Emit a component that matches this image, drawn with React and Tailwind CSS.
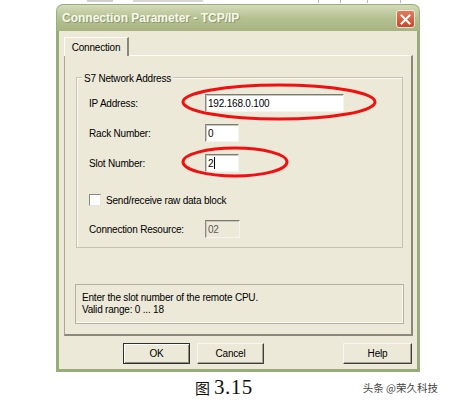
import React from 'react';

const ui = "font-['Liberation_Sans',Arial,sans-serif] text-[10px] tracking-[-0.2px] text-black";

function Field({ width, value, disabled, cursor }) {
  return (
    <div
      className={`h-[18px] flex items-center pl-[2px] border-t border-l border-t-[#7b7a72] border-l-[#8c8b82] border-b border-r border-b-[#f4f3ee] border-r-[#f4f3ee] shadow-[inset_1px_1px_0_#c9c7bc] ${
        disabled ? 'bg-[#ece9d8] text-[#5a5a5a]' : 'bg-white'
      }`}
      style={{ width }}
    >
      <span>{value}</span>
      {cursor && <span className="w-px h-[12px] bg-black ml-px" />}
    </div>
  );
}

function Row({ label, children, className = '' }) {
  return (
    <div className={`flex items-center ${className}`}>
      <span className="w-[116px]">{label}</span>
      {children}
    </div>
  );
}

function Button({ children, primary, className = '' }) {
  return (
    <button
      className={`h-[21px] flex items-center justify-center bg-[#ece9d8] border ${
        primary
          ? 'border-[#2f2f2f] shadow-[inset_1px_1px_0_#ffffff,inset_-1px_-1px_0_#8e8c80]'
          : 'border-t-[#f7f6f1] border-l-[#f7f6f1] border-b-[#3f3e3a] border-r-[#3f3e3a] shadow-[inset_-1px_-1px_0_#a5a398]'
      } ${className}`}
    >
      {children}
    </button>
  );
}

export default function App() {
  return (
    <div className="w-[458px] h-[404px] bg-white relative overflow-hidden">
      {/* leftover of the page above the dialog */}
      <div className="h-[4px] flex items-start">
        <span className="ml-[87px] w-[26px] h-[2px] bg-[#cfcfcf]" />
        <span className="ml-[20px] w-[70px] h-[2px] bg-[#d6d6d6]" />
        <span className="ml-[115px] w-px h-[3px] bg-[#b9b9b9]" />
        <span className="ml-[21px] w-px h-[3px] bg-[#b9b9b9]" />
        <span className="ml-[26px] w-px h-[3px] bg-[#b9b9b9]" />
        <span className="ml-[32px] w-px h-[3px] bg-[#b9b9b9]" />
      </div>

      {/* dialog window */}
      <div className="ml-[56px] w-[364px] h-[368px] flex flex-col">
        <div className="h-[27px] rounded-t-[7px] bg-linear-to-b from-[#d3dbb9] via-[#b6c192] to-[#a7b381] border-t border-x border-[#9aae7c] flex items-center pl-[5px] pr-[4px]">
          <span className="font-['Liberation_Sans',Arial,sans-serif] font-bold text-[12px] text-[#f7f7ec] [text-shadow:1px_1px_0_#8d9a6c]">
            Connection Parameter - TCP/IP
          </span>
          <div className="ml-auto mt-[2px] w-[19px] h-[18px] rounded-[3px] border border-[#f3e6dc] bg-linear-to-b from-[#e27a5c] to-[#c9482a] flex items-center justify-center">
            <svg width="11" height="11" viewBox="0 0 11 11">
              <path d="M1.5 1.5 L9.5 9.5 M9.5 1.5 L1.5 9.5" stroke="#ffffff" strokeWidth="2" strokeLinecap="square" />
            </svg>
          </div>
        </div>

        <div className={`flex-1 bg-[#ece9d8] border-x-[3px] border-b-[3px] border-[#97ac79] pl-[5px] pt-[6px] ${ui}`}>
          {/* tab */}
          <div className="relative z-10 w-[65px] h-[19px] -mb-px bg-[#ece9d8] border-t border-l border-t-[#fcfcf8] border-l-[#fcfcf8] border-r-2 border-r-[#8a887d] flex items-center justify-center pt-px">
            Connection
          </div>

          {/* tab panel */}
          <div className="w-[349px] h-[281px] border-t border-l border-t-[#fcfcf8] border-l-[#a9a698] border-r-2 border-b-2 border-r-[#8a887d] border-b-[#8a887d] pl-[11px] pt-[21px]">
            {/* group box */}
            <div className="relative w-[327px] h-[171px] border border-[#c6c3b2] shadow-[inset_1px_1px_0_#fbfaf5] pl-[12px] pt-[16px]">
              <span className="absolute -top-[7px] left-[5px] px-[2px] bg-[#ece9d8]">S7 Network Address</span>
              <Row label="IP Address:">
                <Field width={139} value="192.168.0.100" />
              </Row>
              <Row label="Rack Number:" className="mt-[12px]">
                <Field width={34} value="0" />
              </Row>
              <Row label="Slot Number:" className="mt-[12px]">
                <Field width={34} value="2" cursor />
              </Row>
              <div className="mt-[19px] h-[18px] flex items-center">
                <span className="w-[12px] h-[12px] bg-white border border-t-[#8a897f] border-l-[#8a897f] border-b-[#e8e6dc] border-r-[#e8e6dc]" />
                <span className="ml-[5px]">Send/receive raw data block</span>
              </div>
              <Row label="Connection Resource:" className="mt-[11px]">
                <Field width={35} value="02" disabled />
              </Row>
            </div>

            {/* hint box */}
            <div className="mt-[36px] -ml-px w-[329px] h-[40px] border border-[#b4b1a1] shadow-[inset_-1px_-1px_0_#fbfaf5] pl-[6px] pt-[7px] leading-[12px]">
              <div>Enter the slot number of the remote CPU.</div>
              <div>Valid range: 0 ... 18</div>
            </div>
          </div>

          {/* buttons */}
          <div className="w-[349px] mt-[7px] flex">
            <Button primary className="ml-[59px] w-[67px]">OK</Button>
            <Button className="ml-[7px] w-[67px]">Cancel</Button>
            <Button className="ml-auto mr-[1px] w-[69px]">Help</Button>
          </div>
        </div>
      </div>

      {/* caption */}
      <div className="h-[32px] flex items-center">
        <span className="ml-[195px] flex items-baseline text-[#111]">
          <span className="font-['Noto_Sans_CJK_SC',sans-serif] text-[15px]">图</span>
          <span className="ml-[4px] font-['Liberation_Serif',serif] text-[21px] tracking-[0.5px]">3.15</span>
        </span>
        <span className="ml-auto mr-[20px] font-['Noto_Sans_CJK_SC',sans-serif] text-[10.5px] text-[#444] [text-shadow:0_0_1px_#ffffff]">
          头条 @荣久科技
        </span>
      </div>

      {/* red annotation ellipses */}
      <svg className="absolute inset-0 pointer-events-none" width="458" height="404">
        <ellipse cx="279" cy="102" rx="96" ry="17" fill="none" stroke="#f01010" strokeWidth="3" />
        <ellipse cx="235" cy="162" rx="52" ry="14" fill="none" stroke="#f01010" strokeWidth="3" />
      </svg>
    </div>
  );
}
